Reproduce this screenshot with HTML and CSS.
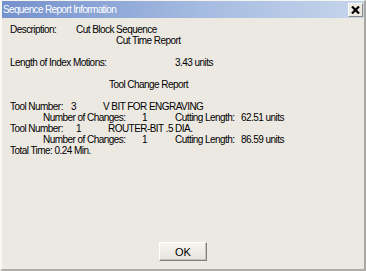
FILE: index.html
```html
<!DOCTYPE html>
<html lang="en">
<head>
  <meta charset="UTF-8" />
  <title>Sequence Report Information</title>
  <link rel="stylesheet" href="styles.css">
</head>
<body>

  <div class="janela">
    <div class="barra-titulo">
      <span class="titulo">Sequence Report Information</span>
      <button class="btn-fechar" title="Close">
        <svg width="9" height="8" viewBox="0 0 9 8">
          <path d="M1 0.5 L8 7.5 M8 0.5 L1 7.5" stroke="#000" stroke-width="2.2" />
        </svg>
      </button>
    </div>

    <div class="relatorio">
      <div class="linha">
        <span class="col-desc">Description:</span>
        <span>Cut Block Sequence</span>
      </div>
      <div class="linha recuo-sub">Cut Time Report</div>
      <div class="linha"></div>
      <div class="linha">
        <span class="col-len">Length of Index Motions:</span>
        <span>3.43 units</span>
      </div>
      <div class="linha"></div>
      <div class="linha recuo-cab">Tool Change Report</div>
      <div class="linha"></div>

      <div class="linha">
        <span class="col-tool">Tool Number:</span>
        <span class="col-num">3</span>
        <span>V BIT FOR ENGRAVING</span>
      </div>
      <div class="linha recuo-det">
        <span class="col-changes">Number of Changes:</span>
        <span class="col-count">1</span>
        <span class="col-cut">Cutting Length:</span>
        <span>62.51 units</span>
      </div>
      <div class="linha">
        <span class="col-tool larga">Tool Number:</span>
        <span class="col-num">1</span>
        <span>ROUTER-BIT .5 DIA.</span>
      </div>
      <div class="linha recuo-det">
        <span class="col-changes">Number of Changes:</span>
        <span class="col-count">1</span>
        <span class="col-cut">Cutting Length:</span>
        <span>86.59 units</span>
      </div>
      <div class="linha">Total Time: 0.24 Min.</div>
    </div>

    <div class="rodape">
      <button class="btn-ok">OK</button>
    </div>
  </div>

</body>
</html>
```

FILE: styles.css
```css
* {
  box-sizing: border-box;
  margin: 0;
  padding: 0;
}

html, body {
  width: 366px;
  height: 271px;
  background: #ece9e3;
  font-family: "Liberation Sans", Arial, sans-serif;
  font-size: 10px;
  letter-spacing: -0.55px;
  color: #000;
}

.janela {
  display: flex;
  flex-direction: column;
  width: 366px;
  height: 271px;
  border-top: 1px solid #f4f3ef;
  border-left: 2px solid #f8f7f3;
  border-right: 2px solid #a9a7a2;
  border-bottom: 2px solid #b0aea8;
  background: #ece9e3;
}

.barra-titulo {
  display: flex;
  align-items: center;
  justify-content: space-between;
  height: 17px;
  padding: 0 1px 0 1px;
  background: linear-gradient(to right, #7491cd, #a5bbe0 55%, #c6d5ec);
}

.titulo {
  color: #fff;
  font-size: 10px;
  letter-spacing: -0.65px;
  line-height: 17px;
}

.btn-fechar {
  width: 15px;
  height: 14px;
  display: flex;
  align-items: center;
  justify-content: center;
  background: #ece9e3;
  border: 1px solid;
  border-color: #fff #8c8a86 #8c8a86 #fff;
  cursor: pointer;
}

.relatorio {
  flex: 1;
  padding: 6px 0 0 8px;
}

.linha {
  display: flex;
  height: 11px;
  line-height: 11px;
  white-space: nowrap;
}

.col-desc { width: 66px; }
.col-len { width: 165px; }
.col-tool { width: 61px; }
.col-tool.larga { width: 66px; }
.col-num { width: 32px; }
.col-changes { width: 99px; }
.col-count { width: 33px; }
.col-cut { width: 66px; }

.recuo-sub { padding-left: 106px; }
.recuo-cab { padding-left: 99px; }
.recuo-det { padding-left: 33px; }

.rodape {
  display: flex;
  justify-content: center;
  padding-bottom: 8px;
}

.btn-ok {
  width: 48px;
  height: 19px;
  font-family: "Liberation Sans", Arial, sans-serif;
  font-size: 11px;
  color: #000;
  background: linear-gradient(#f6f5f1, #e6e3dc);
  border: 1px solid;
  border-color: #fff #808080 #808080 #fff;
  box-shadow: inset -1px -1px 0 #c4c1ba;
  cursor: pointer;
}
```
